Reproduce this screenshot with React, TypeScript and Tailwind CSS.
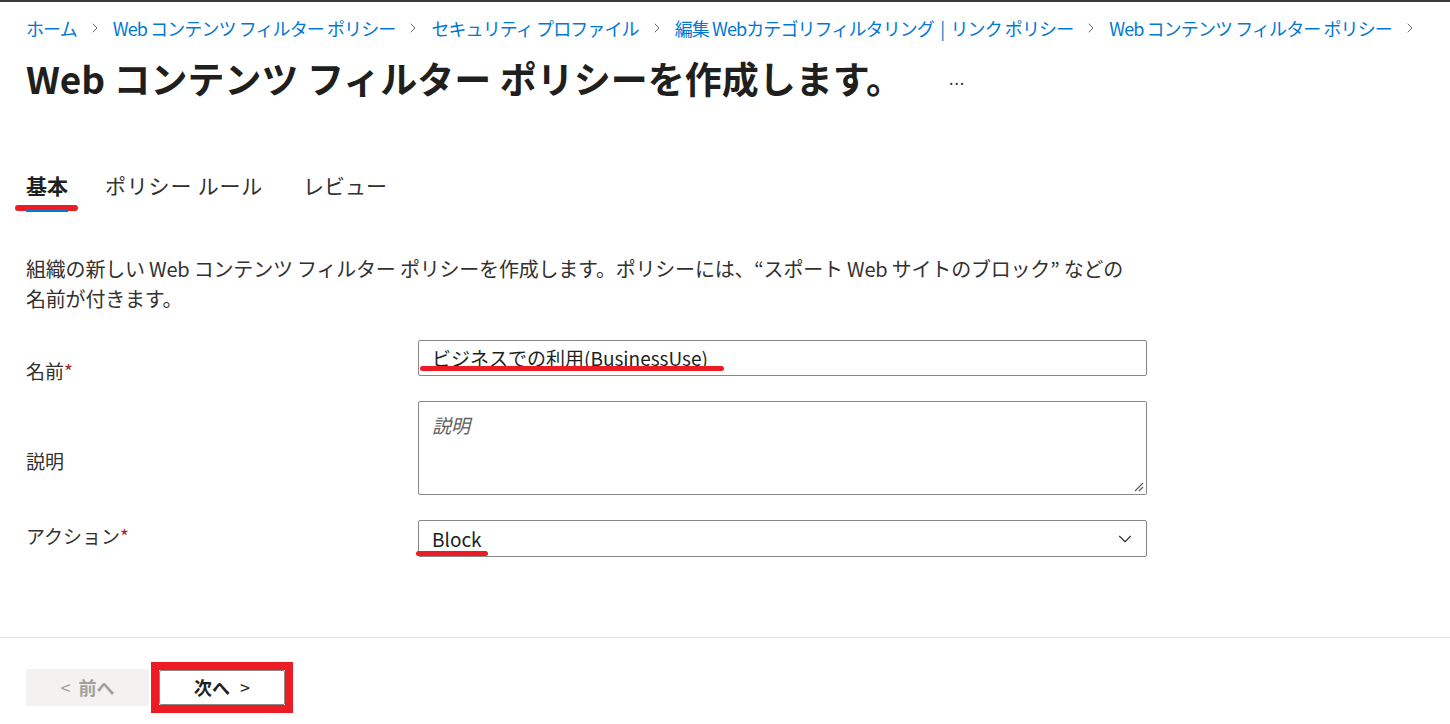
import { ChevronDown, ChevronRight } from "lucide-react";

const font = "font-['Segoe_UI','Noto_Sans_CJK_JP',sans-serif]";

const crumbs = [
  "ホーム",
  "Web コンテンツ フィルター ポリシー",
  "セキュリティ プロファイル",
  "編集 Webカテゴリフィルタリング  |  リンク ポリシー",
  "Web コンテンツ フィルター ポリシー",
];

const App = () => {
  return (
    <div className={`${font} min-h-[724px] w-full bg-white border-t-2 border-[#3a3a3a] text-[#323130]`}>
      <div className="px-[26px]">
        {/* Breadcrumb */}
        <nav className="flex items-center h-[28px] mt-[12px] text-[18px] tracking-[-0.9px] text-[#0078d4]">
          {crumbs.map((c) => (
            <div key={c} className="flex items-center">
              <a href="#" className="whitespace-pre leading-[28px]">
                {c}
              </a>
              <ChevronRight size={16} strokeWidth={1.4} className="mx-[10px] text-[#605e5c]" />
            </div>
          ))}
        </nav>

        {/* Title */}
        <div className="flex items-center mt-[12px] h-[48px]">
          <h1 className="text-[37px] font-bold leading-[48px] text-[#201f1e]">
            Web コンテンツ フィルター ポリシーを作成します。
          </h1>
          <span className="ml-[46px] text-[16px] text-[#323130] tracking-[1px]">...</span>
        </div>

        {/* Tabs */}
        <div className="flex items-end mt-[69px] text-[21px] leading-[28px]">
          <div className="relative pb-[10px]">
            <span className="font-bold text-[#201f1e]">基本</span>
            <span className="absolute left-[-11px] top-[34px] h-[6px] w-[63px] rounded-full bg-[#ed1c24]" />
            <span className="absolute left-0 right-0 top-[38px] h-[3px] bg-[#0078d4]" />
          </div>
          <div className="ml-[37px] pb-[10px] tracking-[0.8px] text-[#323130]">ポリシー ルール</div>
          <div className="ml-[40px] pb-[10px] text-[#323130]">レビュー</div>
        </div>

        {/* Description */}
        <p className="mt-[45px] w-[1112px] text-[20px] leading-[30px] tracking-[-0.2px] text-[#323130]">
          組織の新しい Web コンテンツ フィルター ポリシーを作成します。ポリシーには、“スポート Web サイトのブロック” などの名前が付きます。
        </p>

        {/* Form */}
        <div className="mt-[26px] flex flex-col gap-[25px] text-[19px]">
          <div className="flex items-start h-[36px]">
            <label className="w-[392px] mt-[17px] leading-[28px]">
              名前<span className="text-[#a4262c]">*</span>
            </label>
            <div className="relative w-[729px] h-[36px] border border-[#8a8886] rounded-[2px] flex items-center px-[13px]">
              <span className="leading-[28px] text-[#201f1e]">ビジネスでの利用(BusinessUse)</span>
              <span className="absolute left-[1px] top-[25px] h-[5px] w-[304px] rounded-full bg-[#ed1c24]" />
            </div>
          </div>

          <div className="flex items-start">
            <label className="w-[392px] mt-[46px] leading-[28px]">説明</label>
            <div className="relative w-[729px] h-[94px] border border-[#8a8886] rounded-[2px] px-[13px] pt-[9px]">
              <span className="italic leading-[28px] text-[#605e5c]">説明</span>
              <svg className="absolute right-[2px] bottom-[2px]" width="12" height="12" viewBox="0 0 12 12">
                <path d="M11 3 L3 11 M11 7 L7 11" stroke="#605e5c" strokeWidth="1.2" fill="none" />
              </svg>
            </div>
          </div>

          <div className="flex items-start">
            <label className="w-[392px] mt-[2px] leading-[28px]">
              アクション<span className="text-[#a4262c]">*</span>
            </label>
            <div className="relative w-[729px] h-[37px] border border-[#8a8886] rounded-[2px] flex items-center justify-between pl-[13px] pr-[10px]">
              <span className="leading-[28px] text-[#201f1e]">Block</span>
              <ChevronDown size={22} strokeWidth={1.2} className="text-[#323130]" />
              <span className="absolute left-[-3px] top-[30px] h-[5px] w-[72px] rounded-full bg-[#ed1c24]" />
            </div>
          </div>
        </div>
      </div>

      {/* Footer */}
      <div className="mt-[80px] border-t border-[#e1dfdd]">
        <div className="flex items-start px-[26px] pt-[24px] gap-[2px]">
          <button className="w-[123px] h-[37px] mt-[7px] rounded-[2px] bg-[#f3f2f1] text-[#a19f9d] text-[18px] font-bold flex items-center justify-center gap-[8px]">
            <span className="font-normal">&lt;</span>
            <span>前へ</span>
          </button>
          <div className="border-[8px] border-[#ed1c24]">
            <button className="w-[126px] h-[35px] rounded-[2px] border border-[#8a8886] bg-white text-[#201f1e] text-[18px] font-bold flex items-center justify-center gap-[10px]">
              <span>次へ</span>
              <span className="font-normal">&gt;</span>
            </button>
          </div>
        </div>
      </div>
    </div>
  );
};

export default App;
